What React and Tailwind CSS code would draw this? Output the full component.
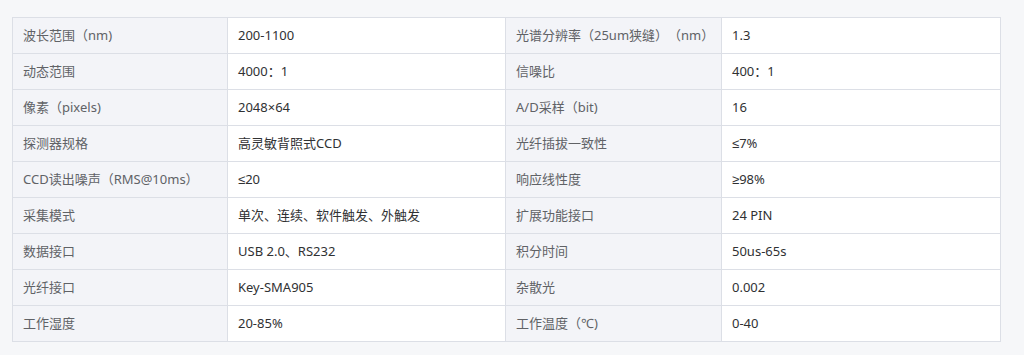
const rows = [
  ["波长范围（nm)", "200-1100", "光谱分辨率（25um狭缝）（nm）", "1.3"],
  ["动态范围", "4000：1", "信噪比", "400：1"],
  ["像素（pixels)", "2048×64", "A/D采样（bit)", "16"],
  ["探测器规格", "高灵敏背照式CCD", "光纤插拔一致性", "≤7%"],
  ["CCD读出噪声（RMS@10ms）", "≤20", "响应线性度", "≥98%"],
  ["采集模式", "单次、连续、软件触发、外触发", "扩展功能接口", "24 PIN"],
  ["数据接口", "USB 2.0、RS232", "积分时间", "50us-65s"],
  ["光纤接口", "Key-SMA905", "杂散光", "0.002"],
  ["工作湿度", "20-85%", "工作温度（℃)", "0-40"],
];

export default function App() {
  return (
    <div
      className="w-[1024px] h-[355px] bg-[#f6f7f9] pt-[17px] pl-[12px] [text-spacing-trim:space-all]"
      style={{ fontFamily: '"Noto Sans", "Liberation Sans", "Noto Sans CJK SC", sans-serif' }}
    >
      <table className="border-collapse table-fixed w-[988px] text-[13px]">
        <colgroup>
          <col className="w-[215px]" />
          <col className="w-[278px]" />
          <col className="w-[216px]" />
          <col className="w-[279px]" />
        </colgroup>
        <tbody>
          {rows.map((r, i) => (
            <tr key={i} className="h-[36px]">
              <td className="border border-[#dcdfe6] bg-[#f3f4f8] text-[#606266] px-[10px] py-0 leading-[35px] whitespace-nowrap">{r[0]}</td>
              <td className="border border-[#dcdfe6] bg-white text-[#303133] px-[10px] py-0 leading-[35px] whitespace-nowrap">{r[1]}</td>
              <td className="border border-[#dcdfe6] bg-[#f3f4f8] text-[#606266] px-[10px] py-0 leading-[35px] whitespace-nowrap">{r[2]}</td>
              <td className="border border-[#dcdfe6] bg-white text-[#303133] px-[10px] py-0 leading-[35px] whitespace-nowrap">{r[3]}</td>
            </tr>
          ))}
        </tbody>
      </table>
    </div>
  );
}
